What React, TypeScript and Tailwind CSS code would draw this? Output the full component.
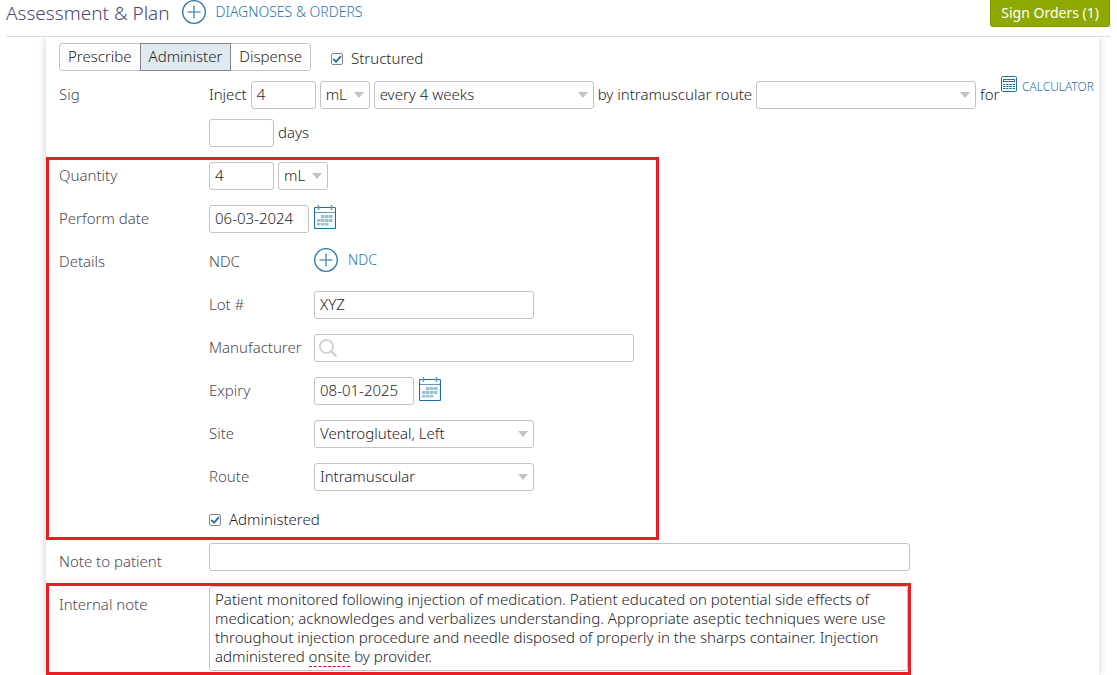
import React, { useState } from 'react';

const fieldClass =
  'h-7 rounded-[3px] border border-[#c3c2c8] bg-white px-[5px] pb-[2px] text-[15px] leading-5 text-[#1f1e28] focus:outline-none focus:border-[#1f6fa3]';

const PlusIcon = () => (
  <svg className="size-6 shrink-0" viewBox="0 0 24 24" fill="none" aria-hidden="true">
    <circle cx="12" cy="12" r="11.3" stroke="#2a74a5" strokeWidth="1.3" />
    <path d="M12 5.5v13M5.5 12h13" stroke="#5f9bbf" strokeWidth="1.6" />
  </svg>
);

const CalendarIcon = () => (
  <svg className="h-6 w-[22px]" viewBox="0 0 22 24" fill="none" aria-hidden="true">
    <rect x="0.5" y="2.5" width="21" height="21" rx="1" stroke="#1f6fa3" strokeWidth="1.2" />
    <path d="M1 7.5h20" stroke="#5f9bbf" />
    <path d="M4.5 0v5M17.5 0v5" stroke="#5f9bbf" strokeWidth="1.5" />
    <path
      d="M7 10h3.5v3H7zM11 10h3.5v3H11zM15 10h3.5v3H15zM3 14h3.5v3H3zM7 14h3.5v3H7zM11 14h3.5v3H11zM15 14h3.5v3H15zM3 18h3.5v2.5H3zM7 18h3.5v2.5H7zM11 18h3.5v2.5H11z"
      fill="#98bfd4"
    />
  </svg>
);

const CalculatorIcon = () => (
  <svg className="size-4 shrink-0" viewBox="0 0 16 16" fill="none" aria-hidden="true">
    <rect x="0.5" y="0.5" width="15" height="15" rx="1" stroke="#1f6fa3" />
    <rect x="2.5" y="3.5" width="11" height="2" stroke="#1f6fa3" />
    <path d="M2 8.5h12M2 10.5h12M2 12.5h12" stroke="#1f6fa3" strokeDasharray="2.4 0.8" />
  </svg>
);

const SearchIcon = () => (
  <svg className="pointer-events-none absolute left-[5px] top-[5px] size-[18px]" viewBox="0 0 18 18" fill="none" aria-hidden="true">
    <circle cx="7.5" cy="7.5" r="6.6" stroke="#d0ced6" strokeWidth="1.8" />
    <path d="M12.2 12.2l5.2 5.2" stroke="#d0ced6" strokeWidth="2.2" />
  </svg>
);

interface SelectProps {
  id: string;
  label?: string;
  options: string[];
  className: string;
}

const Select: React.FC<SelectProps> = ({ id, label, options, className }) => (
  <span className={`relative inline-block ${className}`}>
    <select id={id} aria-label={label} className={`${fieldClass} block w-full appearance-none`}>
      {options.map((option) => (
        <option key={option}>{option}</option>
      ))}
    </select>
    <svg className="pointer-events-none absolute right-[6px] top-[11px] h-[6px] w-[10px]" viewBox="0 0 10 6" aria-hidden="true">
      <path d="M0 0h10L5 6z" fill="#c3c2c8" />
    </svg>
  </span>
);

interface CheckProps {
  id: string;
  label: string;
}

const Check: React.FC<CheckProps> = ({ id, label }) => {
  const [checked, setChecked] = useState(true);
  return (
    <div className="flex items-center gap-2">
      <span className="relative size-3">
        <input
          id={id}
          type="checkbox"
          checked={checked}
          onChange={(e) => setChecked(e.target.checked)}
          className="block size-3 appearance-none rounded-[2px] border border-[#85848f] bg-white"
        />
        {checked && (
          <svg className="pointer-events-none absolute inset-0 size-3" viewBox="0 0 12 12" fill="none" aria-hidden="true">
            <path d="M2.2 5.8l2.8 2.8 5-5.4" stroke="#1f6fa3" strokeWidth="1.8" />
          </svg>
        )}
      </span>
      <label htmlFor={id} className="pb-[2px] text-[#1f1e28]">{label}</label>
    </div>
  );
};

interface DetailProps {
  label: string;
  htmlFor: string;
  children: React.ReactNode;
}

const Detail: React.FC<DetailProps> = ({ label, htmlFor, children }) => (
  <div className="flex h-7 items-center">
    <label htmlFor={htmlFor} className="w-[105px] shrink-0 pb-[2px]">{label}</label>
    {children}
  </div>
);

const modes = ['Prescribe', 'Administer', 'Dispense'];

const App: React.FC = () => {
  const [mode, setMode] = useState('Administer');
  const [note, setNote] = useState(
    'Patient monitored following injection of medication. Patient educated on potential side effects of medication; acknowledges and verbalizes understanding. Appropriate aseptic techniques were use throughout injection procedure and needle disposed of properly in the sharps container. Injection administered onsite by provider.'
  );

  return (
    <div className="overflow-hidden bg-white pr-[7px] pl-[6px] font-['Noto_Sans',sans-serif] text-[15px] leading-5 font-light text-[#4b4a55]">
      <header className="flex h-[37px] items-start border-b border-[#dcdcde]">
        <h1 className="text-[19px] leading-[26px] font-light text-[#4b4775]">Assessment &amp; Plan</h1>
        <button type="button" className="ml-3 flex items-center gap-[10px] text-sm text-[#2f72a4]">
          <PlusIcon />
          DIAGNOSES &amp; ORDERS
        </button>
        <button
          type="button"
          className="ml-auto h-[27px] rounded-b-[3px] border border-t-0 border-[#7c9800] bg-[#8fa900] px-[10px] text-sm font-normal text-white"
        >
          Sign Orders (1)
        </button>
      </header>

      <main className="mr-[11px] ml-10 pt-[6px] shadow-[0_0_8px_rgba(0,0,0,0.2)] [clip-path:inset(0_-10px)]">
        <div className="flex items-center pl-[13px]">
          <div className="flex">
            {modes.map((item) => (
              <button
                key={item}
                type="button"
                aria-pressed={item === mode}
                onClick={() => setMode(item)}
                className={`-ml-px h-7 border px-2 pb-[2px] text-[#1f1e28] first:ml-0 first:rounded-l-[3px] last:rounded-r-[3px] ${
                  item === mode ? 'z-10 border-[#85848f] bg-[#e0e8f0]' : 'border-[#c3c2c8] bg-white'
                }`}
              >
                {item}
              </button>
            ))}
          </div>
          <div className="ml-5 pt-1">
            <Check id="structured" label="Structured" />
          </div>
        </div>

        <div className="mt-[10px] flex items-start pr-[5px] pl-[13px]">
          <span className="w-[150px] shrink-0 leading-[26px]">Sig</span>
          <div className="flex min-w-0 flex-1 flex-wrap items-center gap-x-1 gap-y-[10px] text-[#1f1e28]">
            <label htmlFor="dose" className="pb-[2px]">Inject</label>
            <input id="dose" defaultValue="4" className={`${fieldClass} w-[65px]`} />
            <Select id="dose-unit" label="Dose unit" options={['mL', 'mg']} className="w-[50px]" />
            <Select id="frequency" label="Frequency" options={['every 4 weeks', 'every 2 weeks']} className="w-[220px]" />
            <label htmlFor="sig-route" className="pb-[2px]">by intramuscular route</label>
            <Select id="sig-route" options={['', 'as needed']} className="w-[220px]" />
            <label htmlFor="days" className="pb-[2px]">for</label>
            <input id="days" className={`${fieldClass} w-[65px]`} />
            <span className="pb-[2px]">days</span>
          </div>
          <a href="#calculator" className="-mt-[5px] flex items-start gap-[5px] text-xs leading-[22px] text-[#2f72a4]">
            <CalculatorIcon />
            CALCULATOR
          </a>
        </div>

        <section className="mt-[10px] w-[613px] max-w-full border-[3px] border-[#eb1c24] pt-[2px] pb-[3px] pl-[10px]">
          <div className="flex flex-col gap-[15px]">
            <div className="flex h-7 items-center">
              <label htmlFor="quantity" className="w-[150px] pb-[2px]">Quantity</label>
              <input id="quantity" defaultValue="4" className={`${fieldClass} mr-1 w-[65px]`} />
              <Select id="quantity-unit" label="Quantity unit" options={['mL', 'mg']} className="w-[50px]" />
            </div>
            <div className="flex h-7 items-center">
              <label htmlFor="perform-date" className="w-[150px] pb-[2px]">Perform date</label>
              <input id="perform-date" defaultValue="06-03-2024" className={`${fieldClass} mr-[5px] w-[100px]`} />
              <button type="button" aria-label="Pick perform date" className="pb-1"><CalendarIcon /></button>
            </div>
            <div className="flex">
              <span className="w-[150px] shrink-0 leading-[26px]">Details</span>
              <div className="flex flex-1 flex-col gap-[15px]">
                <Detail label="NDC" htmlFor="ndc">
                  <button id="ndc" type="button" className="flex items-center gap-[10px] pb-1 text-sm text-[#2f72a4]">
                    <PlusIcon />
                    NDC
                  </button>
                </Detail>
                <Detail label="Lot #" htmlFor="lot">
                  <input id="lot" defaultValue="XYZ" className={`${fieldClass} w-[220px]`} />
                </Detail>
                <Detail label="Manufacturer" htmlFor="manufacturer">
                  <div className="relative">
                    <SearchIcon />
                    <input id="manufacturer" type="text" className={`${fieldClass} w-[320px] bg-transparent pl-7`} />
                  </div>
                </Detail>
                <Detail label="Expiry" htmlFor="expiry">
                  <input id="expiry" defaultValue="08-01-2025" className={`${fieldClass} mr-[5px] w-[100px]`} />
                  <button type="button" aria-label="Pick expiry date" className="pb-1"><CalendarIcon /></button>
                </Detail>
                <Detail label="Site" htmlFor="site">
                  <Select id="site" options={['Ventrogluteal, Left', 'Ventrogluteal, Right']} className="w-[220px]" />
                </Detail>
                <Detail label="Route" htmlFor="route">
                  <Select id="route" options={['Intramuscular', 'Subcutaneous']} className="w-[220px]" />
                </Detail>
                <div className="flex h-7 items-center">
                  <Check id="administered" label="Administered" />
                </div>
              </div>
            </div>
          </div>
        </section>

        <div className="mt-[3px] flex items-start pl-[13px]">
          <label htmlFor="patient-note" className="w-[150px] shrink-0 pt-[5px] leading-[26px]">Note to patient</label>
          <input id="patient-note" className={`${fieldClass} w-[701px]`} />
        </div>

        <section className="mt-[9px] flex w-[865px] max-w-full items-start border-[3px] border-[#eb1c24] pb-[1px] pl-[10px]">
          <label htmlFor="internal-note" className="w-[150px] shrink-0 pt-[5px] leading-[26px]">Internal note</label>
          <div className="relative flex-1 leading-[19px]">
            <div aria-hidden="true" className="pointer-events-none invisible absolute inset-0 border px-[5px] pt-[3px] pr-4 whitespace-pre-wrap">
              {note.split(/(onsite)/).map((part, i) =>
                part === 'onsite' ? (
                  <span key={i} className="relative">
                    {part}
                    <span className="visible absolute inset-x-0 -bottom-px border-b border-dashed border-[#c8102e]" />
                  </span>
                ) : (
                  part
                )
              )}
            </div>
            <textarea
              id="internal-note"
              value={note}
              spellCheck={false}
              onChange={(e) => setNote(e.target.value)}
              className="block h-[85px] w-full resize-none overflow-hidden rounded-[3px] border border-[#c3c2c8] bg-transparent px-[5px] pt-[3px] pr-4 text-[#1f1e28] focus:outline-none"
            />
          </div>
        </section>
      </main>
    </div>
  );
};

export default App;
